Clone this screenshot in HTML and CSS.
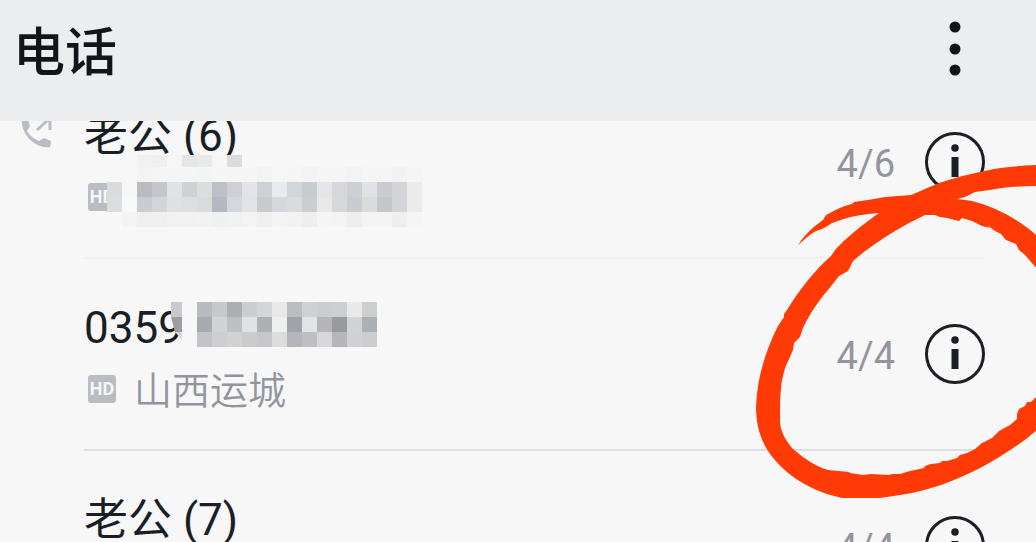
FILE: index.html
```html
<!DOCTYPE html>
<html lang="zh-CN">
<head>
<meta charset="UTF-8">
<meta name="viewport" content="width=device-width,initial-scale=1.0">
<title>电话</title>
<link rel="stylesheet" href="styles.css">
</head>

<body>

<!-- ====== Header ====== -->
<header class="topbar">
  <h1>电话</h1>
  <button class="menu-btn" type="button" aria-label="更多">
    <svg viewBox="0 0 12 56"><circle cx="6" cy="6" r="5.5"/><circle cx="6" cy="28" r="5.5"/><circle cx="6" cy="49" r="5.5"/></svg>
  </button>
</header>

<!-- ====== 通话记录 ====== -->
<main class="calls">
  <ul class="call-list">
    <li class="call faint">
      <svg class="outgoing" viewBox="0 0 32 36">
        <path class="handset" d="M2 5 L7 4 L10 13 L7 18 C10 23 14 26 19 28 L24 25 L31 28 L30 34 C16 36 0 22 2 5Z"/>
        <path class="arrow" d="M17 17 L29 6 M19 5 H30 V17"/>
      </svg>
      <div class="info">
        <div class="name">老公 (6)</div>
        <div class="sub"><span class="hd">HD</span></div>
        <svg class="mosaic mosaic-sub" viewBox="107 155 315 72" data-mosaic="sub"></svg>
      </div>
      <time class="date">4/6</time>
      <button class="detail-btn" type="button" aria-label="详情">
        <svg viewBox="0 0 60 60"><circle class="ring" cx="30" cy="30" r="28.5"/><circle cx="30" cy="16" r="3.8"/><path d="M26.500 25h7v20h-7z"/></svg>
      </button>
    </li>

    <li class="call">
      <div class="info">
        <div class="name">0359</div>
        <div class="sub"><span class="hd">HD</span>山西运城</div>
        <svg class="mosaic mosaic-name" viewBox="171 302 206 45" data-mosaic="name"></svg>
      </div>
      <time class="date">4/4</time>
      <button class="detail-btn" type="button" aria-label="详情">
        <svg viewBox="0 0 60 60"><circle class="ring" cx="30" cy="30" r="28.5"/><circle cx="30" cy="16" r="3.8"/><path d="M26.500 25h7v20h-7z"/></svg>
      </button>
    </li>

    <li class="call">
      <div class="info">
        <div class="name">老公 (7)</div>
      </div>
      <time class="date">4/4</time>
      <button class="detail-btn" type="button" aria-label="详情">
        <svg viewBox="0 0 60 60"><circle class="ring" cx="30" cy="30" r="28.5"/><circle cx="30" cy="16" r="3.8"/><path d="M26.500 25h7v20h-7z"/></svg>
      </button>
    </li>
  </ul>
</main>

<!-- 手绘红圈 -->
<svg class="marker" viewBox="740 150 296 360" aria-hidden="true">
  <path d="M1037 165 C1015 166 995 168 980 172 C962 176 946 180 932 186 L911 195 L885 197 L868 200 L854 202 L852 204 C842 206 834 211 826 215 L823 220 L815 226 C808 232 802 238 798 245.500 C804 240 810 234 816 231 L822 229 L826 227 L832 223 L838 221 C851 216 865 214 879 213 C862 225 846 238 835 250 L831 256 C814 271 800 289 787 310 L784 314 L784 317 L778 326 C766 350 757 377 756 407 C756 438 769 458 792 476 C807 487 824 494 842 498 L880 498 L900 495 C929 491 957 480 982 467 C1002 456 1021 444 1037 430
           L1037 396 L1031 402 L1027 402 L1025 406 L1019 409 L1017 414 L1017 419 L1010 425 L999 431 L992 438 L982 443 L975 449 L967 453 L960 455 L957 458 L947 461 L942 461 L940 463 L931 464 L925 466 L924 468 L910 471 L900 474 L892 474 L889 475 L871 474 L863 475 L850 473 L849 472 L828 470 C814 466 801 456 792 448 C784 438 780 430 780 420 L780 408 C780 397 781 388 782 380 L785 368 L793 350 L794 343 L800 337 L803 328 C811 311 821 298 832 285 L839 276 L848 271 L853 261 C870 246 891 233 909 223 L925 215
           L935 215 L940 217 L947 218 L959 221 L962 218 L972 221 L982 226 L990 228 L987 225 L995 231 L1001 234 L1006 240 L1016 244 L1019 250 L1025 255 L1037 269 L1037 236 C1020 220 996 207 972 201 L965 200 L957 199 L965 197 L975 192 L990 190 C1005 187 1020 186 1037 186 Z"/>
</svg>

<script>
/* 马赛克: [y, 高, 起始x, 颜色...]，每格宽 15 */
const mosaics={
  sub:[
    [155,12,137,"f0f1f2 eeefef f6f6f6 e5e7e6 e8eae9 f6f6f6 dbdcde"],
    [167,15,122,"f6f6f6 f3f3f3 f5f5f5 f4f5f5 f5f5f5 f3f4f4 f5f5f5 f5f5f5 f5f5f5 f1f4f3 f5f6f6 f5f5f5 f3f3f4 f5f5f5 f5f5f5 f3f3f4 f5f5f5 f5f5f5 f2f2f2 f5f5f5"],
    [182,15,107,"dadbde f5f6f6 b8bbbf c5c6cb e1e2e5 ced2d6 dbdddf bdc0c6 cfd0d5 e3e4e8 cfd0d4 e9eaee d2d6d8 c8ccd0 e4e5e8 d5d7da cbd0d5 e0e2e6 cbccd0 d3d4d9 ebebeb"],
    [197,15,107,"dcdde0 f7f8f8 cbccd2 d4d5da dfe0e4 dddee2 d9dadc b5b8c3 d6d7dc e2e3e6 c9cacf d6d7de dadbdd cccdd2 e8e8e9 d6d7d9 cbccd2 dadbdd c5c6cb d3d4d9 ebebeb"],
    [212,15,122,"f3f3f3 efefef eeefee f1f1f1 f1f1f1 f2f2f2 eff1f0 f0f2f1 f3f3f3 efefef f3f3f3 f2f2f2 eeeeee f5f5f5 f3f3f3 eeeeef f3f3f3 f2f4f3 eeeeef f5f5f5"]
  ],
  name:[
    [302,15,197,"b8babe c7c8cc adaeb2 cccdd2 d4d5d8 e7e8e7 bbbdc0 cfd0d4 cccdce cecfd1 e9e9e9 cdced0"],
    [317,15,197,"a9aaae d2d3d5 bebfc3 e1e2e5 adb0b4 eff1f0 a0a4a9 e2e3e8 b4b4b9 999a9f d2d3d4 acb1b5"],
    [332,15,197,"c2c4c9 cdced1 d1d2d3 cacbcd c6c7ca dcdedc b4b6bb bebfc5 d8d8db b5b6bb d0d1d4 cccdd0"]
  ]
};
/* 涂抹边缘的不规则格子 */
const extra={
  sub:"",
  name:'<path fill="#f7f7f7" d="M182 302h15v45h-19l4-7z"/><path fill="#c8c9cc" d="M171 302h11v15h-11z"/><path fill="#9c9da1" d="M171 317h11v15h-7z"/><path fill="#d5d6d8" d="M175 332h7v8z"/>'
};

document.querySelectorAll("[data-mosaic]").forEach(svg=>{
  const key=svg.dataset.mosaic;
  svg.innerHTML=mosaics[key].map(([y,h,x,colors])=>
    colors.split(" ").map((c,i)=>
      `<rect x="${x+i*15}" y="${y}" width="15" height="${h}" fill="#${c}"/>`
    ).join("")
  ).join("")+extra[key];
});
</script>
</body>
</html>
```
FILE: styles.css
```css
:root{
  --bg     : #f7f7f7;
  --bar    : #ecedef;
  --text   : #1b1e25;
  --muted  : #92959d;
  --badge  : #b9bcc2;
  --line   : #dddee1;
  --marker : #ff3a05;
}
*{box-sizing:border-box;}
html,body{margin:0;height:100%;}
body{
  position:relative;display:flex;flex-direction:column;overflow:hidden;
  font-family:Roboto,"Noto Sans CJK SC",sans-serif;color:var(--text);background:var(--bg);
}
button{padding:0;border:none;background:none;color:inherit;cursor:pointer;}
svg{display:block;}

.topbar{
  flex:none;display:flex;align-items:flex-start;justify-content:space-between;
  height:121px;padding:21px 75px 0 13px;background:var(--bar);
}
h1{margin:0;font-size:52px;font-weight:500;line-height:66px;color:#111419;}
.menu-btn svg{width:12px;height:56px;fill:#111419;}

/* 列表已向上滚动一段 */
.calls{flex:1;min-height:0;overflow:hidden;}
.call-list{list-style:none;margin:-55px 0 0;padding:0;}
.call{
  position:relative;display:flex;align-items:center;
  min-height:192px;padding:0 51px 0 84px;
}
.call::after{
  content:'';position:absolute;left:84px;right:51px;bottom:-1px;height:2px;background:var(--line);
}
.call.faint::after{background:#f1f2f2;}

.outgoing{position:absolute;left:20px;top:47px;width:32px;height:36px;}
.handset{fill:var(--badge);}
.arrow{fill:none;stroke:var(--badge);stroke-width:3;}

.info{position:relative;flex:1;align-self:flex-start;padding-top:38px;}
.name{font-size:44px;line-height:64px;}
.sub{
  display:flex;align-items:center;gap:18px;height:62px;padding-left:4px;
  font-size:38px;font-weight:350;line-height:62px;color:var(--muted);
}
.hd{
  width:28px;height:28px;margin-bottom:4px;border-radius:3px;background:var(--badge);color:#f6f7f7;
  font-size:18px;font-weight:700;line-height:28px;text-align:center;
}
.date{margin-right:30px;padding-top:4px;font-size:38px;line-height:44px;color:var(--muted);}
.detail-btn svg{width:60px;height:60px;fill:var(--text);}
.ring{fill:none;stroke:var(--text);stroke-width:3;}

.mosaic{position:absolute;}
.mosaic-sub{left:23px;top:89px;width:315px;height:72px;}
.mosaic-name{left:87px;top:44px;width:206px;height:45px;}

.marker{position:absolute;top:150px;right:0;width:296px;height:360px;fill:var(--marker);pointer-events:none;}
```
